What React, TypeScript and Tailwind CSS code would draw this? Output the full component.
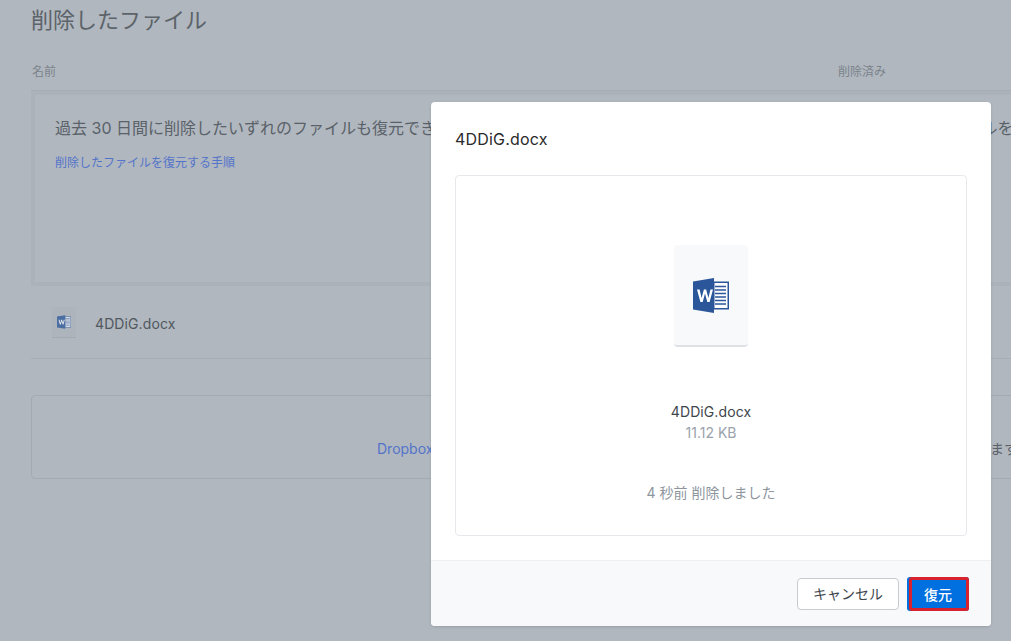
import React from "react";

const FONT = "font-['Inter','Noto_Sans_CJK_JP',sans-serif]";

const WordIcon: React.FC<{ className?: string }> = ({ className }) => (
  <svg viewBox="0 0 36 35" className={className}>
    <rect x="20" y="3.5" width="16" height="28" fill="#2b579a" />
    <rect x="21.5" y="5" width="13" height="25" fill="#fff" />
    <path
      d="M22 8.5h11M22 12h11M22 15.5h11M22 19h11M22 22.5h11M22 26h11"
      stroke="#2b579a"
      strokeWidth="1.5"
    />
    <path d="M0 3.5 21 0v35L0 31.5z" fill="#2b579a" />
    <path
      d="M4 11.5h2.6l2 8.6 2.3-8.6h2.2l2.3 8.6 2-8.6H20l-3.4 12.5h-2.3L12 15.6 9.7 24H7.4z"
      fill="#fff"
    />
  </svg>
);

const App: React.FC = () => {
  return (
    <div className={`relative h-[641px] w-[1011px] overflow-hidden bg-[#b0b7bf] ${FONT}`}>
      {/* page behind the dialog */}
      <div className="w-[1300px] pl-[31px]">
        <h1 className="h-[58px] pt-[5px] text-[22px] leading-[30px] text-[#5c6369]">
          削除したファイル
        </h1>
        <div className="flex h-[33px] items-center border-b border-[#a6adb5] pb-[5px] text-xs text-[#7b838b]">
          <span className="w-[807px] pl-[1px]">名前</span>
          <span>削除済み</span>
        </div>
        <div className="h-[195px] border-4 border-[#abb2ba] px-5 pt-[21px]">
          <p className="whitespace-nowrap text-base leading-6 text-[#5a6168]">
            過去 30 日間に削除したいずれのファイルも復元できます。一覧の削除済みファイルを選択して、右側のパネルで 復元するファイルを確認
          </p>
          <a className="mt-[14px] block text-xs leading-[18px] text-[#5474c9]">
            削除したファイルを復元する手順
          </a>
        </div>
        <div className="flex h-[73px] items-center border-b border-[#a6adb5] pl-[21px]">
          <div className="flex h-[31px] w-6 items-center justify-center border-b border-[#a3aab2] bg-[#adb4bc]">
            <WordIcon className="h-[14px] w-[14px] opacity-75" />
          </div>
          <span className="ml-[19px] mt-[3px] text-sm tracking-[0.1px] text-[#50575e]">4DDiG.docx</span>
        </div>
        <div className="mt-[36px] flex h-[84px] items-end whitespace-nowrap rounded-sm border border-[#a3aab2] pb-[19px] pl-[345px] text-sm">
          <a className="w-[613px] text-[#5474c9]">Dropbox</a>
          <span className="text-[#5a6168]">ます</span>
        </div>
      </div>

      {/* dialog */}
      <div className="absolute left-[431px] top-[102px] flex h-[524px] w-[560px] flex-col overflow-hidden rounded bg-white shadow-sm">
        <h2 className="pl-6 pt-[26px] text-base leading-[22px] tracking-[0.2px] text-[#2a2a2a]">4DDiG.docx</h2>
        <div className="mx-6 mt-[25px] flex h-[361px] flex-col items-center rounded-sm border border-[#e6e8eb] pt-[69px]">
          <div className="flex h-[102px] w-[74px] items-center justify-center rounded-sm border-b-2 border-[#dde1e6] bg-[#f7f9fa]">
            <WordIcon className="h-[35px] w-[36px]" />
          </div>
          <p className="mt-[55px] text-sm leading-5 tracking-[0.1px] text-[#3d464d]">4DDiG.docx</p>
          <p className="mt-[1px] text-sm leading-5 text-[#9aa2aa]">11.12 KB</p>
          <p className="mt-[40px] text-sm leading-5 text-[#8d959d]">4 秒前 削除しました</p>
        </div>
        <div className="mt-6 flex flex-1 items-center justify-end gap-2 border-t border-[#eef0f2] bg-[#f7f9fa] pr-[22px]">
          <button className="h-8 w-[102px] rounded border border-[#c8ccd1] bg-white text-sm text-[#3d464d]">
            キャンセル
          </button>
          <button className="relative h-[34px] w-[62px] rounded-[3px] bg-[#0070e0] pt-[2px] text-sm font-medium text-white">
            復元
            <span className="absolute inset-y-0 left-[2px] right-0 rounded-[3px] border-[3px] border-[#d8232f]" />
          </button>
        </div>
      </div>
    </div>
  );
};

export default App;
